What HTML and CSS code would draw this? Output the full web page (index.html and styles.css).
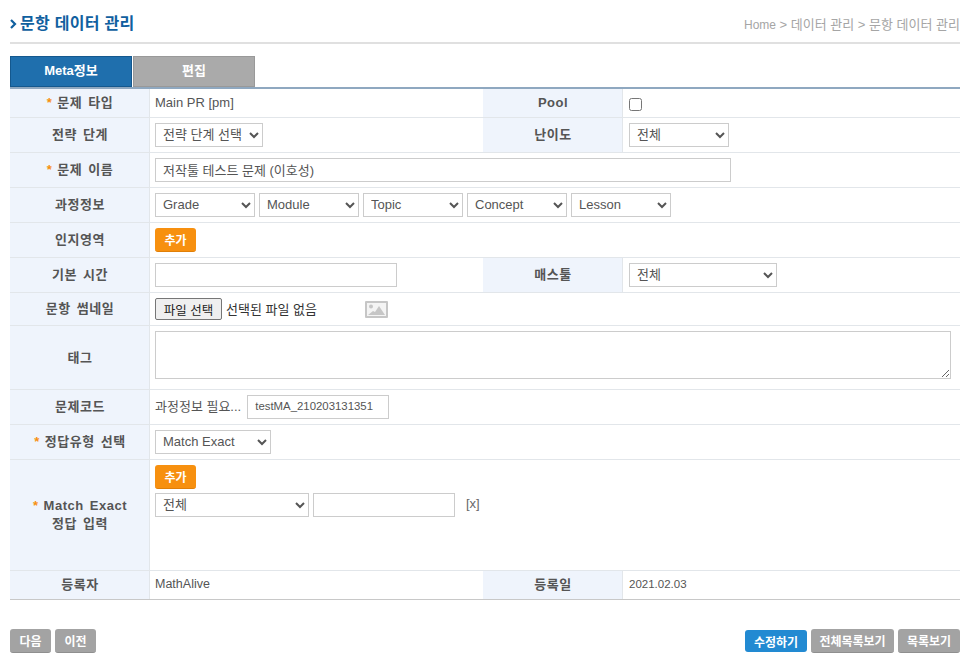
FILE: index.html
```html
<!DOCTYPE html>
<html lang="ko">
<head>
    <meta charset="UTF-8">
    <meta name="viewport" content="width=device-width, initial-scale=1.0">
    <title>문항 데이터 관리</title>
    <link rel="stylesheet" href="styles.css">
</head>
<body>
    <div class="page">
        <div class="page-head">
            <h2 class="page-title">
                <svg class="title-arrow" width="7" height="10" viewBox="0 0 7 10"><path d="M1 1l4 4-4 4" fill="none" stroke="#10609f" stroke-width="2.2"/></svg>
                문항 데이터 관리
            </h2>
            <div class="crumbs"><span class="crumb-home">Home</span> &gt; 데이터 관리 &gt; 문항 데이터 관리</div>
        </div>

        <div class="tabs">
            <a class="tab tab-on">Meta정보</a>
            <a class="tab">편집</a>
        </div>

        <table class="form-table">
            <colgroup>
                <col class="col-th">
                <col class="col-td">
                <col class="col-th">
                <col>
            </colgroup>
            <tr class="row-short">
                <th><span class="req">*</span>문제 타입</th>
                <td>Main PR [pm]</td>
                <th>Pool</th>
                <td class="td-right"><input type="checkbox" class="check"></td>
            </tr>
            <tr>
                <th>전략 단계</th>
                <td><select class="w108"><option>전략 단계 선택</option></select></td>
                <th>난이도</th>
                <td class="td-right"><select class="w100"><option>전체</option></select></td>
            </tr>
            <tr>
                <th><span class="req">*</span>문제 이름</th>
                <td colspan="3"><input type="text" class="w576" value="저작툴 테스트 문제 (이호성)"></td>
            </tr>
            <tr>
                <th>과정정보</th>
                <td colspan="3">
                    <div class="inline">
                        <select class="w100"><option>Grade</option></select>
                        <select class="w100"><option>Module</option></select>
                        <select class="w100"><option>Topic</option></select>
                        <select class="w100"><option>Concept</option></select>
                        <select class="w100"><option>Lesson</option></select>
                    </div>
                </td>
            </tr>
            <tr>
                <th>인지영역</th>
                <td colspan="3"><button type="button" class="btn btn-orange">추가</button></td>
            </tr>
            <tr>
                <th>기본 시간</th>
                <td><input type="text" class="w242"></td>
                <th>매스툴</th>
                <td class="td-right"><select class="w148"><option>전체</option></select></td>
            </tr>
            <tr class="row-file">
                <th>문항 썸네일</th>
                <td colspan="3">
                    <div class="inline">
                        <button type="button" class="file-btn">파일 선택</button>
                        <span class="file-name">선택된 파일 없음</span>
                        <svg class="pic-icon" width="23" height="17" viewBox="0 0 23 17">
                            <rect x="0" y="0" width="23" height="17" rx="1" fill="#c6c6c6"/>
                            <rect x="2" y="2" width="19" height="13" fill="#f4f4f4"/>
                            <circle cx="6" cy="5.5" r="2" fill="#c6c6c6"/>
                            <path d="M3 14l5-4 2 1 4-6 6 9z" fill="#c6c6c6"/>
                        </svg>
                    </div>
                </td>
            </tr>
            <tr class="row-tag">
                <th>태그</th>
                <td colspan="3"><textarea class="tag-box"></textarea></td>
            </tr>
            <tr>
                <th>문제코드</th>
                <td colspan="3">
                    <div class="inline">
                        <span class="code-label">과정정보 필요...</span>
                        <input type="text" class="w142 code-input" value="testMA_210203131351">
                    </div>
                </td>
            </tr>
            <tr>
                <th><span class="req">*</span>정답유형 선택</th>
                <td colspan="3"><select class="w116"><option>Match Exact</option></select></td>
            </tr>
            <tr class="row-answer">
                <th><span class="req">*</span>Match Exact<br>정답 입력</th>
                <td colspan="3">
                    <button type="button" class="btn btn-orange">추가</button>
                    <div class="inline answer-line">
                        <select class="w154"><option>전체</option></select>
                        <input type="text" class="w142">
                        <a class="remove">[x]</a>
                    </div>
                </td>
            </tr>
            <tr class="row-short">
                <th>등록자</th>
                <td class="td-name">MathAlive</td>
                <th>등록일</th>
                <td class="td-right td-date">2021.02.03</td>
            </tr>
        </table>

        <div class="foot-btns">
            <div class="inline">
                <button type="button" class="btn btn-gray">다음</button>
                <button type="button" class="btn btn-gray">이전</button>
            </div>
            <div class="inline">
                <button type="button" class="btn btn-blue">수정하기</button>
                <button type="button" class="btn btn-gray btn-wide">전체목록보기</button>
                <button type="button" class="btn btn-gray btn-mid">목록보기</button>
            </div>
        </div>
    </div>
</body>
</html>
```

FILE: styles.css
```css
body {
    margin: 0;
    padding: 0;
    font-family: "Liberation Sans", "Noto Sans CJK KR", sans-serif;
    font-size: 13px;
    color: #555;
    background-color: #fff;
}
.page {
    padding: 0 10px;
}
.page-head {
    box-sizing: border-box;
    display: flex;
    justify-content: space-between;
    align-items: center;
    height: 44px;
    padding-top: 5px;
    border-bottom: 2px solid #e0e0e0;
    margin-bottom: 12px;
}
.page-title {
    margin: 0;
    font-size: 16px;
    font-weight: 700;
    line-height: 20px;
    letter-spacing: 0.3px;
    color: #10609f;
    display: flex;
    align-items: center;
    gap: 3px;
}
.crumbs {
    font-size: 13px;
    color: #a5a5a5;
}
.crumb-home {
    font-size: 12px;
}
.tabs {
    display: flex;
    gap: 1px;
    height: 31px;
}
.tab {
    width: 122px;
    box-sizing: border-box;
    text-align: center;
    line-height: 27px;
    font-weight: 700;
    font-size: 13px;
    color: #fff;
    background-color: #aaa;
    border: 1px solid #999;
}
.tab-on {
    background-color: #1f6fad; /* aba ativa */
    border-color: #14588e;
}
.form-table {
    width: 950px;
    table-layout: fixed;
    border-collapse: collapse;
    border-top: 2px solid #8fa8c0;
    border-bottom: 1px solid #c8c8c8;
}
.col-th {
    width: 140px;
}
.col-td {
    width: 333px;
}
.form-table tr {
    height: 35px;
}
.form-table th,
.form-table td {
    border-top: 1px solid #e2e6ea;
    padding: 5px;
}
.form-table tr:first-child th,
.form-table tr:first-child td {
    border-top: none;
}
.form-table th {
    background-color: #eff4fc;
    box-shadow: inset -1px 0 0 #e2e6ea;
    color: #555;
    font-weight: 700;
    font-size: 13px;
    line-height: 18px;
    letter-spacing: 0.5px;
    word-spacing: 2px;
    text-align: center;
}
.form-table td {
    color: #555;
}
.form-table td.td-right {
    padding-left: 6px;
}
.form-table td.td-name {
    font-size: 12.5px;
}
.form-table td.td-date {
    font-size: 11.5px;
}
.form-table tr.row-short {
    height: 29px;
}
.form-table tr.row-short td {
    padding-top: 4px;
    padding-bottom: 6px;
}
.form-table tr.row-file {
    height: 33px;
}
.form-table tr.row-tag {
    height: 64px;
}
.form-table tr.row-answer {
    height: 111px;
}
.row-tag td,
.row-answer td {
    vertical-align: top;
}
.req {
    color: #f7900f;
    margin-right: 5px;
}
.inline {
    display: flex;
    align-items: center;
    gap: 4px;
}
select,
input[type="text"] {
    box-sizing: border-box;
    height: 24px;
    border: 1px solid #ccc;
    background-color: #fff;
    font-family: inherit;
    font-size: 13px;
    color: #555;
    display: block;
}
select {
    padding: 0 3px 2px;
}
input[type="text"] {
    padding: 0 7px 2px;
}
input.code-input {
    font-size: 11.4px;
}
.w100 { width: 100px; }
.w108 { width: 108px; }
.w116 { width: 116px; }
.w142 { width: 142px; }
.w148 { width: 148px; }
.w154 { width: 154px; }
.w242 { width: 242px; }
.w576 { width: 576px; }
.check {
    display: block;
    margin: 4px 0 0;
    width: 13px;
    height: 13px;
}
.tag-box {
    box-sizing: border-box;
    display: block;
    width: 796px;
    height: 48px;
    border: 1px solid #ccc;
}
.btn {
    box-sizing: border-box;
    display: block;
    height: 24px;
    width: 41px;
    padding: 0;
    border: none;
    border-radius: 3px;
    color: #fff;
    font-family: inherit;
    font-size: 12px;
    font-weight: 700;
    cursor: pointer;
}
.btn-orange {
    background-color: #f7900f;
    border-bottom: 1px solid #e07f08;
}
.btn-gray {
    background-color: #a3a3a3;
    border-bottom: 1px solid #8f8f8f;
}
.btn-blue {
    width: 62px;
    height: 22px;
    background-color: #228ad2;
}
.btn-wide {
    width: 83px;
}
.btn-mid {
    width: 62px;
}
.file-btn {
    box-sizing: border-box;
    width: 67px;
    height: 22px;
    padding: 0;
    border: 1px solid #767676;
    border-radius: 2px;
    background-color: #efefef;
    font-family: inherit;
    font-size: 12.5px;
    color: #222;
}
.file-name {
    margin: -1px 44px 0 0;
    color: #333;
}
.code-label {
    margin: -3px 2px 0 0;
}
.answer-line {
    margin-top: 4px;
}
.remove {
    margin-left: 7px;
    margin-top: -3px;
    color: #666;
}
.foot-btns {
    display: flex;
    justify-content: space-between;
    align-items: center;
    margin-top: 29px;
}
```
